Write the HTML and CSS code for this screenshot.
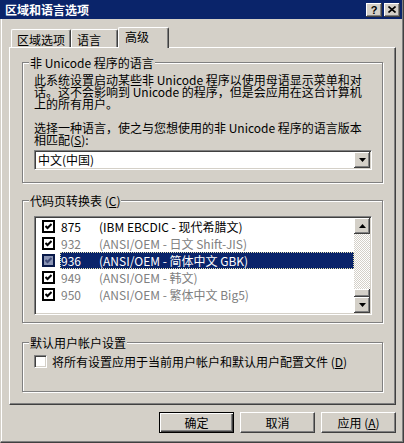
FILE: index.html
```html
<!DOCTYPE html>
<html lang="zh-CN">
<head>
    <meta charset="UTF-8">
    <title>区域和语言选项</title>
    <link rel="stylesheet" href="styles.css">
</head>
<body>
    <div class="window">
        <div class="titlebar">
            <span class="title">区域和语言选项</span>
            <span class="title-btn help">?</span>
            <span class="title-btn close">
                <svg width="8" height="7" viewBox="0 0 8 7"><path d="M0.5 0.5 L7.5 6.5 M7.5 0.5 L0.5 6.5" stroke="#000" stroke-width="1.6" fill="none"/></svg>
            </span>
        </div>

        <div class="main">
            <div class="tabs">
                <div class="tab tab-region">区域选项</div>
                <div class="tab tab-lang">语言</div>
                <div class="tab tab-adv active">高级</div>
            </div>

            <div class="page">
                <div class="group group-lang">
                    <div class="legend">非 Unicode 程序的语言</div>
                    <p class="text first">此系统设置启动某些非 Unicode 程序以使用母语显示菜单和对<br>话。这不会影响到 Unicode 的程序，但是会应用在这台计算机<br>上的所有用户。</p>
                    <p class="text second">选择一种语言，使之与您想使用的非 Unicode 程序的语言版本<br>相匹配(<u>S</u>):</p>
                    <div class="combo">
                        <span class="combo-value">中文(中国)</span>
                        <span class="combo-btn">
                            <svg width="7" height="4" viewBox="0 0 7 4"><path d="M0 0 H7 L3.5 4 Z" fill="#000"/></svg>
                        </span>
                    </div>
                </div>

                <div class="group group-codepage">
                    <div class="legend">代码页转换表 (<u>C</u>)</div>
                    <div class="listbox">
                        <div class="items">
                            <div class="row">
                                <span class="check"><svg width="7" height="7" viewBox="0 0 7 7"><path d="M0.5 3 L2.5 5 L6.5 1" stroke="#000" stroke-width="2" fill="none"/></svg></span>
                                <span class="label"><span class="num">875</span>(IBM EBCDIC - 现代希腊文)</span>
                            </div>
                            <div class="row dim">
                                <span class="check"><svg width="7" height="7" viewBox="0 0 7 7"><path d="M0.5 3 L2.5 5 L6.5 1" stroke="#000" stroke-width="2" fill="none"/></svg></span>
                                <span class="label"><span class="num">932</span>(ANSI/OEM - 日文 Shift-JIS)</span>
                            </div>
                            <div class="row selected">
                                <span class="check"><svg width="7" height="7" viewBox="0 0 7 7"><path d="M0.5 3 L2.5 5 L6.5 1" stroke="#3e4a78" stroke-width="2" fill="none"/></svg></span>
                                <span class="label"><span class="num">936</span>(ANSI/OEM - 简体中文 GBK)</span>
                            </div>
                            <div class="row dim">
                                <span class="check"><svg width="7" height="7" viewBox="0 0 7 7"><path d="M0.5 3 L2.5 5 L6.5 1" stroke="#000" stroke-width="2" fill="none"/></svg></span>
                                <span class="label"><span class="num">949</span>(ANSI/OEM - 韩文)</span>
                            </div>
                            <div class="row dim">
                                <span class="check"><svg width="7" height="7" viewBox="0 0 7 7"><path d="M0.5 3 L2.5 5 L6.5 1" stroke="#000" stroke-width="2" fill="none"/></svg></span>
                                <span class="label"><span class="num">950</span>(ANSI/OEM - 繁体中文 Big5)</span>
                            </div>
                        </div>
                        <div class="scrollbar">
                            <span class="sb-btn">
                                <svg width="7" height="4" viewBox="0 0 7 4"><path d="M0 4 H7 L3.5 0 Z" fill="#000"/></svg>
                            </span>
                            <span class="sb-track"></span>
                            <span class="sb-thumb"></span>
                            <span class="sb-btn">
                                <svg width="7" height="4" viewBox="0 0 7 4"><path d="M0 0 H7 L3.5 4 Z" fill="#000"/></svg>
                            </span>
                        </div>
                    </div>
                </div>

                <div class="group group-user">
                    <div class="legend">默认用户帐户设置</div>
                    <div class="option">
                        <span class="checkbox"></span>
                        <span>将所有设置应用于当前用户帐户和默认用户配置文件 (<u>D</u>)</span>
                    </div>
                </div>
            </div>

            <div class="buttons">
                <button class="default">确定</button>
                <button>取消</button>
                <button>应用 (<u>A</u>)</button>
            </div>
        </div>
    </div>
</body>
</html>
```

FILE: styles.css
```css
body {
    margin: 0;
    background-color: #d4d0c8;
    font-family: "Noto Sans CJK SC", sans-serif;
    font-size: 12px;
    color: #000;
}
.window {
    width: 404px;
    height: 443px;
    box-sizing: border-box;
    background: #d4d0c8;
    border-left: 1px solid #d4d0c8;
    border-right: 1px solid #404040;
    border-bottom: 1px solid #404040;
    box-shadow: inset -1px -1px 0 #808080, inset 1px 0 0 #fff;
}
.titlebar {
    display: flex;
    align-items: center;
    height: 19px;
    margin: 0 1px 0 -1px;
    padding: 0 2px 0 5px;
    background: #0a246a;
}
.title {
    color: #fff;
    font-weight: bold;
    line-height: 19px;
    margin-right: auto;
}
.title-btn {
    display: flex;
    align-items: center;
    justify-content: center;
    width: 16px;
    height: 14px;
    box-sizing: border-box;
    background: #d4d0c8;
    box-shadow: inset -1px -1px 0 #404040, inset 1px 1px 0 #fff, inset -2px -2px 0 #808080;
}
.help {
    margin-right: 2px;
    font-family: "Liberation Sans", sans-serif;
    font-weight: bold;
    font-size: 11px;
    line-height: 14px;
}
.main {
    padding: 0 7px 0 8px;
}
.tabs {
    display: flex;
    align-items: flex-end;
    height: 20px;
    margin-top: 8px;
    padding-left: 2px;
}
.tab {
    height: 18px;
    box-sizing: border-box;
    padding-top: 2px;
    line-height: 16px;
    border-top: 1px solid #fff;
    border-left: 1px solid #fff;
    border-right: 1px solid #404040;
    border-top-left-radius: 2px;
    border-top-right-radius: 2px;
    box-shadow: inset -1px 0 0 #808080;
    background: #d4d0c8;
}
.tab-region {
    width: 60px;
    padding-left: 5px;
}
.tab-lang {
    width: 47px;
    padding-left: 5px;
}
.tab-adv {
    width: 51px;
    padding-left: 6px;
}
.tab.active {
    height: 21px;
    margin-bottom: -1px;
    padding-top: 1px;
    position: relative;
    z-index: 1;
}
.page {
    width: 387px;
    height: 358px;
    box-sizing: border-box;
    padding: 14px 0 0 12px;
    border-top: 1px solid #fff;
    border-left: 1px solid #fff;
    border-right: 1px solid #404040;
    border-bottom: 1px solid #404040;
    box-shadow: inset -1px -1px 0 #808080;
}
.group {
    width: 361px;
    box-sizing: border-box;
    padding: 0 10px 0 11px;
    border: 1px solid #808080;
    box-shadow: inset 1px 1px 0 #fff, 1px 1px 0 #fff;
}
.group-lang {
    height: 121px;
}
.group-codepage {
    height: 123px;
    margin-top: 17px;
}
.group-user {
    height: 50px;
    margin-top: 19px;
}
.legend {
    width: fit-content;
    margin: -7px 0 0 -5px;
    padding: 0 1px;
    line-height: 13px;
    background: #d4d0c8;
    white-space: nowrap;
}
.text {
    margin: 0;
    line-height: 12px;
    white-space: nowrap;
}
.text.first {
    margin-top: 5px;
}
.text.second {
    margin-top: 12px;
}
.combo {
    display: flex;
    align-items: center;
    height: 20px;
    margin-top: 4px;
    box-sizing: border-box;
    padding: 1px;
    background: #fff;
    border-top: 1px solid #808080;
    border-left: 1px solid #808080;
    border-right: 1px solid #fff;
    border-bottom: 1px solid #fff;
    box-shadow: inset 1px 1px 0 #404040, inset -1px -1px 0 #d4d0c8;
}
.combo-value {
    flex: 1;
    padding-left: 2px;
    line-height: 16px;
}
.combo-btn, .sb-btn {
    display: flex;
    align-items: center;
    justify-content: center;
    width: 16px;
    height: 16px;
    box-sizing: border-box;
    background: #d4d0c8;
    box-shadow: inset -1px -1px 0 #404040, inset 1px 1px 0 #fff, inset -2px -2px 0 #808080;
}
.combo-btn {
    height: 16px;
}
.listbox {
    display: flex;
    height: 99px;
    margin-top: 9px;
    box-sizing: border-box;
    background: #fff;
    border-top: 1px solid #808080;
    border-left: 1px solid #808080;
    border-right: 1px solid #fff;
    border-bottom: 1px solid #fff;
    box-shadow: inset 1px 1px 0 #404040, inset -1px -1px 0 #d4d0c8;
    padding: 1px;
}
.items {
    flex: 1;
}
.row {
    display: flex;
    align-items: center;
    height: 17px;
    white-space: nowrap;
}
.check {
    display: flex;
    align-items: center;
    justify-content: center;
    width: 13px;
    height: 13px;
    box-sizing: border-box;
    margin: 0 5px 0 6px;
    border: 2px solid #000;
    background: #fff;
}
.label {
    flex: 1;
    height: 17px;
    box-sizing: border-box;
    line-height: 15px;
    border: 1px solid transparent;
}
.num {
    display: inline-block;
    width: 38px;
}
.row.dim .label {
    color: #808080;
}
.row.selected .label {
    background: #0a246a;
    color: #fff;
    border: 1px dotted #e8e4b0;
}
.row.selected .check {
    background: #8a94b4;
    border-color: #081848;
}
.scrollbar {
    display: flex;
    flex-direction: column;
    width: 16px;
}
.sb-track {
    flex: 1;
    background: repeating-conic-gradient(#fff 0 25%, #d4d0c8 0 50%) 0 0 / 2px 2px;
}
.sb-thumb {
    height: 8px;
    background: #d4d0c8;
    box-shadow: inset -1px -1px 0 #404040, inset 1px 1px 0 #fff, inset -2px -2px 0 #808080;
}
.option {
    display: flex;
    align-items: center;
    margin-top: 6px;
    line-height: 13px;
    white-space: nowrap;
}
.checkbox {
    width: 13px;
    height: 13px;
    box-sizing: border-box;
    margin-right: 5px;
    background: #fff;
    border-top: 1px solid #808080;
    border-left: 1px solid #808080;
    border-right: 1px solid #fff;
    border-bottom: 1px solid #fff;
    box-shadow: inset 1px 1px 0 #404040, inset -1px -1px 0 #d4d0c8;
}
.buttons {
    display: flex;
    justify-content: flex-end;
    gap: 6px;
    width: 387px;
    margin-top: 7px;
}
button {
    width: 75px;
    height: 21px;
    box-sizing: border-box;
    padding: 0;
    font-family: inherit;
    font-size: 12px;
    color: #000;
    background: #d4d0c8;
    border: 1px solid;
    border-color: #fff #404040 #404040 #fff;
    box-shadow: inset -1px -1px 0 #808080;
}
button.default {
    border-color: #000;
    box-shadow: inset 1px 1px 0 #fff, inset -1px -1px 0 #404040, inset -2px -2px 0 #808080;
}
```
